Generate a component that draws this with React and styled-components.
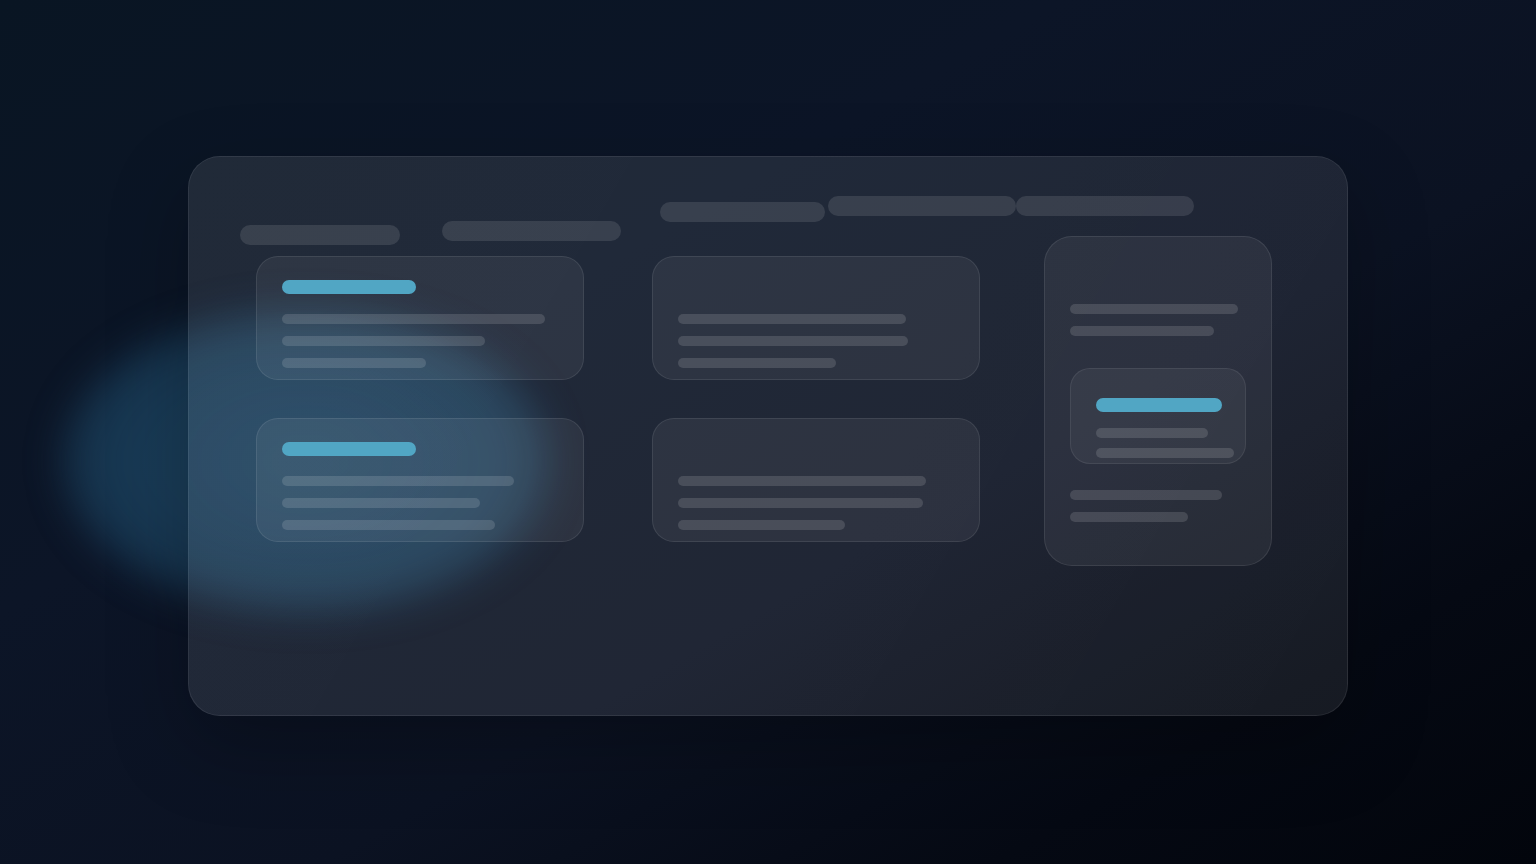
import React from "react";
import styled, { createGlobalStyle } from "styled-components";

const GlobalStyle = createGlobalStyle`
  html, body {
    margin: 0;
    padding: 0;
    font-family: "Inter", "Liberation Sans", sans-serif;
  }
  body {
    background: #070d19;
  }
`;

const Page = styled.div`
  position: relative;
  width: 100%;
  height: 100vh;
  min-height: 864px;
  overflow: hidden;
  display: flex;
  justify-content: center;
  align-items: flex-start;
  padding-top: 156px;
  box-sizing: border-box;
  background: linear-gradient(
    150deg,
    #091523 0%,
    #0c1527 35%,
    #0b1222 60%,
    #050913 82%,
    #02050c 100%
  );
`;

const Glow = styled.div`
  position: absolute;
  left: 62px;
  top: 308px;
  width: 488px;
  height: 306px;
  border-radius: 50%;
  background: radial-gradient(
    ellipse at center,
    rgba(38, 92, 128, 0.62) 0%,
    rgba(34, 86, 120, 0.55) 55%,
    rgba(30, 78, 112, 0.3) 80%,
    rgba(30, 78, 112, 0) 100%
  );
  filter: blur(18px);
  pointer-events: none;
`;

const Panel = styled.div`
  position: relative;
  width: 1160px;
  height: 560px;
  box-sizing: border-box;
  padding-top: 39px;
  border-radius: 32px;
  background: linear-gradient(
    120deg,
    rgba(255, 255, 255, 0.09) 0%,
    rgba(255, 255, 255, 0.085) 60%,
    rgba(255, 255, 255, 0.075) 100%
  );
  border: 1px solid rgba(255, 255, 255, 0.08);
  box-shadow: 0 30px 80px rgba(0, 0, 0, 0.25);
`;

const Header = styled.div`
  display: flex;
  align-items: flex-start;
  padding-left: 51px;
  height: 49px;
`;

const HeadPill = styled.div`
  width: ${(p) => p.$w}px;
  height: 20px;
  margin-top: ${(p) => p.$top || 0}px;
  margin-left: ${(p) => p.$left || 0}px;
  border-radius: 10px;
  background: rgba(255, 255, 255, 0.11);
  flex-shrink: 0;
`;

const Body = styled.div`
  display: flex;
  align-items: flex-start;
  padding-left: 67px;
`;

const Column = styled.div`
  display: flex;
  flex-direction: column;
  gap: 38px;
  width: ${(p) => p.$w}px;
  margin-top: ${(p) => p.$top || 0}px;
  margin-left: ${(p) => p.$left || 0}px;
`;

const Card = styled.div`
  height: 124px;
  box-sizing: border-box;
  padding: 23px 25px 11px;
  display: flex;
  flex-direction: column;
  justify-content: flex-end;
  border-radius: 22px;
  background: rgba(255, 255, 255, 0.06);
  border: 1px solid rgba(255, 255, 255, 0.09);
`;

const TallCard = styled.div`
  height: 330px;
  box-sizing: border-box;
  padding: 67px 25px 43px;
  display: flex;
  flex-direction: column;
  border-radius: 28px;
  background: rgba(255, 255, 255, 0.06);
  border: 1px solid rgba(255, 255, 255, 0.09);
`;

const InnerCard = styled.div`
  width: 176px;
  height: 96px;
  box-sizing: border-box;
  margin: 32px 0 26px;
  padding: 29px 25px 5px;
  display: flex;
  flex-direction: column;
  border-radius: 20px;
  background: rgba(255, 255, 255, 0.05);
  border: 1px solid rgba(255, 255, 255, 0.08);
`;

const Title = styled.div`
  width: ${(p) => p.$w}px;
  height: 14px;
  border-radius: 7px;
  background: #51a6c4;
  margin-bottom: ${(p) => p.$gap}px;
  flex-shrink: 0;
`;

const Lines = styled.div`
  display: flex;
  flex-direction: column;
  gap: ${(p) => p.$gap || 12}px;
`;

const Line = styled.div`
  width: ${(p) => p.$w}px;
  height: 10px;
  border-radius: 5px;
  background: rgba(255, 255, 255, 0.135);
`;

function SkeletonCard({ title, lines }) {
  return (
    <Card>
      {title && <Title $w={title} $gap={20} />}
      <Lines>
        {lines.map((w, i) => (
          <Line key={i} $w={w} />
        ))}
      </Lines>
    </Card>
  );
}

export default function App() {
  return (
    <>
      <GlobalStyle />
      <Page>
        <Glow />
        <Panel>
          <Header>
            <HeadPill $w={160} $top={29} />
            <HeadPill $w={179} $top={25} $left={42} />
            <HeadPill $w={165} $top={6} $left={39} />
            <HeadPill $w={188} $left={3} />
            <HeadPill $w={178} />
          </Header>
          <Body>
            <Column $w={328} $top={11}>
              <SkeletonCard title={134} lines={[263, 203, 144]} />
              <SkeletonCard title={134} lines={[232, 198, 213]} />
            </Column>
            <Column $w={328} $top={11} $left={68}>
              <SkeletonCard lines={[228, 230, 158]} />
              <SkeletonCard lines={[248, 245, 167]} />
            </Column>
            <Column $w={228} $top={-9} $left={64}>
              <TallCard>
                <Lines>
                  <Line $w={168} />
                  <Line $w={144} />
                </Lines>
                <InnerCard>
                  <Title $w={126} $gap={16} />
                  <Lines $gap={10}>
                    <Line $w={112} />
                    <Line $w={138} />
                  </Lines>
                </InnerCard>
                <Lines>
                  <Line $w={152} />
                  <Line $w={118} />
                </Lines>
              </TallCard>
            </Column>
          </Body>
        </Panel>
      </Page>
    </>
  );
}
